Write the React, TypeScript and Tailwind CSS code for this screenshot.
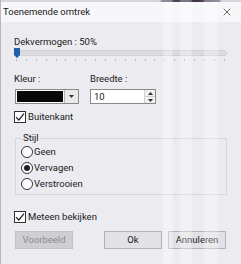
import { X } from 'lucide-react'

function Checkbox({ label }: { label: string }) {
  return (
    <div className="flex items-center gap-[2px] h-[12px]">
      <div className="w-[12px] h-[12px] border border-[#333] bg-white flex items-center justify-center">
        <svg width="10" height="10" viewBox="0 0 10 10">
          <path d="M1 5.2 L3.8 8 L9 1.6" fill="none" stroke="#222" strokeWidth="1.2" />
        </svg>
      </div>
      <span className="text-[9.5px] leading-[12px] text-[#1a1a1a]">{label}</span>
    </div>
  )
}

function Radio({ label, checked }: { label: string; checked?: boolean }) {
  return (
    <div className="flex items-center gap-[1px] h-[16px]">
      <div className="w-[12px] h-[12px] rounded-full border border-[#333] bg-white flex items-center justify-center">
        {checked && <div className="w-[6px] h-[6px] rounded-full bg-[#222]" />}
      </div>
      <span className="text-[9.5px] leading-[12px] text-[#1a1a1a]">{label}</span>
    </div>
  )
}

export default function App() {
  const ticks = Array.from({ length: 22 })
  return (
    <div className="w-[241px] h-[264px] relative overflow-hidden bg-[#ecebef] font-['Roboto','Noto_Sans',sans-serif] text-[#1a1a1a] border-l border-[#b9b7bd]">
      <div className="h-[2px] bg-[linear-gradient(90deg,#d8d6dc_0%,#d8d6dc_66%,#5b4d63_68%,#3a3040_80%,#6a5c70_90%,#d8d6dc_92%)]" />
      <div className="h-[20px] bg-[#f7f6f9] flex items-center justify-between pl-[2px] pr-[8px]">
        <span className="text-[9.5px] leading-[12px]">Toenemende omtrek</span>
        <X className="w-[12px] h-[12px]" strokeWidth={1.3} />
      </div>

      <div className="pl-[13px] pr-[14px] pt-[14px]">
        <div className="text-[9.5px] leading-[12px]">Dekvermogen : 50%</div>

        <div className="relative h-[10px] flex items-center">
          <div className="w-full h-[6px] rounded-[3px] bg-[#dcdbdf] border border-[#d0cfd3]" />
          <svg className="absolute left-0 top-0" width="6" height="10" viewBox="0 0 6 10">
            <path d="M0 0 H6 V7 L3 10 L0 7 Z" fill="#1f5fa8" />
          </svg>
        </div>
        <div className="flex justify-between px-[2px] mt-[1px]">
          {ticks.map((_, i) => (
            <div key={i} className="w-[1px] h-[2px] bg-[#b9b8bc]" />
          ))}
        </div>

        <div className="flex gap-[11px] mt-[12px]">
          <div className="w-[65px]">
            <div className="text-[9.5px] leading-[12px]">Kleur :</div>
            <div className="mt-[4px] ml-[1px] flex h-[15px] border border-[#8a8a8a] bg-white">
              <div className="flex-1 bg-[#080808] m-[1px]" />
              <div className="w-[14px] bg-[#e9e9e9] border-l border-[#b5b5b5] flex items-center justify-center">
                <svg width="5" height="3" viewBox="0 0 5 3"><path d="M0 0 H5 L2.5 3 Z" fill="#333" /></svg>
              </div>
            </div>
          </div>
          <div className="w-[66px]">
            <div className="text-[9.5px] leading-[12px]">Breedte :</div>
            <div className="mt-[4px] flex h-[15px] border border-[#8a8a8a] bg-white">
              <div className="flex-1 pl-[3px] text-[9.5px] leading-[13px]">10</div>
              <div className="w-[11px] flex flex-col border-l border-[#d0d0d0]">
                <div className="flex-1 bg-[#f0f0f0] border-b border-[#d0d0d0] flex items-center justify-center">
                  <svg width="5" height="3" viewBox="0 0 5 3"><path d="M0 3 H5 L2.5 0 Z" fill="#333" /></svg>
                </div>
                <div className="flex-1 bg-[#f0f0f0] flex items-center justify-center">
                  <svg width="5" height="3" viewBox="0 0 5 3"><path d="M0 0 H5 L2.5 3 Z" fill="#333" /></svg>
                </div>
              </div>
            </div>
          </div>
        </div>

        <div className="mt-[7px]">
          <Checkbox label="Buitenkant" />
        </div>

        <fieldset className="mt-[9px] ml-[1px] border border-[#d6d5d9] pl-[5px] pb-[2px]">
          <legend className="text-[9.5px] leading-[12px] px-[1px] ml-[1px]">Stijl</legend>
          <div className="flex flex-col">
            <Radio label="Geen" />
            <Radio label="Vervagen" checked />
            <Radio label="Verstrooien" />
          </div>
        </fieldset>

        <div className="mt-[16px]">
          <Checkbox label="Meteen bekijken" />
        </div>

        <div className="flex mt-[8px] ml-[1px]">
          <button className="w-[58px] h-[18px] bg-[#cfced2] border border-[#c2c1c5] text-[9.5px] text-[#8d8c90] leading-[12px]">Voorbeeld</button>
          <button className="ml-[31px] w-[58px] h-[18px] bg-[#e2e1e5] border border-[#b3b2b6] text-[9.5px] leading-[12px]">Ok</button>
          <button className="ml-[6px] w-[58px] h-[18px] bg-[#e2e1e5] border border-[#b3b2b6] text-[9.5px] leading-[12px]">Annuleren</button>
        </div>
      </div>

      <div className="pointer-events-none absolute inset-0 bg-[linear-gradient(90deg,transparent_0%,transparent_67%,rgba(255,255,255,0.35)_68%,rgba(255,255,255,0.35)_71%,transparent_72%,transparent_74%,rgba(255,255,255,0.3)_75%,rgba(255,255,255,0.3)_79%,transparent_80%,transparent_84%,rgba(255,255,255,0.3)_85%,rgba(255,255,255,0.3)_90%,transparent_91%)]" />
    </div>
  )
}
